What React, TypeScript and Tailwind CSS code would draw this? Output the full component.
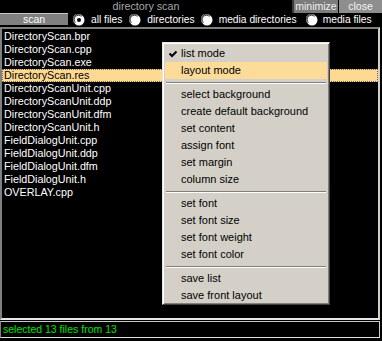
import React from "react"

const files = [
  "DirectoryScan.bpr",
  "DirectoryScan.cpp",
  "DirectoryScan.exe",
  "DirectoryScan.res",
  "DirectoryScanUnit.cpp",
  "DirectoryScanUnit.ddp",
  "DirectoryScanUnit.dfm",
  "DirectoryScanUnit.h",
  "FieldDialogUnit.cpp",
  "FieldDialogUnit.ddp",
  "FieldDialogUnit.dfm",
  "FieldDialogUnit.h",
  "OVERLAY.cpp",
]

const menuGroups = [
  ["list mode", "layout mode"],
  ["select background", "create default background", "set content", "assign font", "set margin", "column size"],
  ["set font", "set font size", "set font weight", "set font color"],
  ["save list", "save front layout"],
]

function Radio({ checked }: { checked?: boolean }) {
  return (
    <svg width="12" height="12" viewBox="0 0 12 12" className="shrink-0">
      <circle cx="6" cy="6" r="5.5" fill="#ffffff" />
      <path d="M1.5 9 A5 5 0 0 1 9 1.5" fill="none" stroke="#808080" strokeWidth="1" />
      <path d="M2.5 8.5 A4 4 0 0 1 8.5 2.5" fill="none" stroke="#404040" strokeWidth="1" />
      {checked && <circle cx="6" cy="6" r="2" fill="#000000" />}
    </svg>
  )
}

function Check() {
  return (
    <svg width="8" height="8" viewBox="0 0 8 8" className="absolute left-[4px] top-[5px]">
      <path d="M0.5 3.5 L3 6 L7.5 1.5" fill="none" stroke="#000" strokeWidth="2" />
    </svg>
  )
}

export default function App() {
  return (
    <div
      className="relative w-[382px] h-[341px] bg-black overflow-hidden text-[10.5px] leading-none whitespace-nowrap"
      style={{ fontFamily: '"Liberation Sans", Arial, sans-serif' }}
    >
      {/* title bar */}
      <div className="flex h-[13px]">
        <div className="flex-1 flex items-center justify-center text-[#a8a8a8] text-[10.75px]">directory scan</div>
        <div className="w-[46px] shrink-0 flex items-center justify-center bg-[#7c7c7c] text-[#f0f0f0] border-l-2 border-[#3a3a3a]">
          minimize
        </div>
        <div className="w-[44px] shrink-0 flex items-center justify-center bg-[#8e8e8e] text-[#f4f4f4] border-l border-black">
          close
        </div>
      </div>

      {/* options row */}
      <div className="flex items-center h-[12px]">
        <div className="w-[68px] shrink-0 h-[12px] flex items-center justify-center bg-[#808080] border-t border-[#c8c8c8] text-white">
          scan
        </div>
        <div className="flex items-center text-white ml-[5px] pt-[2px] text-[10.25px]">
          <Radio checked />
          <span className="ml-[6px] mr-[7px]">all files</span>
          <Radio />
          <span className="ml-[6px] mr-[6px]">directories</span>
          <Radio />
          <span className="ml-[6px] mr-[9px]">media directories</span>
          <Radio />
          <span className="ml-[5px]">media files</span>
        </div>
      </div>

      {/* file list */}
      <div className="mt-[2px] w-[380px] h-[293px] border-2 border-t-[#808080] border-l-[#808080] border-r-[#d4d0c8] border-b-[#e8e8e8] pt-px">
        {files.map((f) => (
          <div
            key={f}
            className={
              f === "DirectoryScan.res"
                ? "h-[13px] flex items-center pl-[1px] bg-[#fdd992] text-black border border-dotted border-[#7a6a50]"
                : "h-[13px] flex items-center pl-[2px] text-white"
            }
          >
            <span className="text-[10.75px]">{f}</span>
          </div>
        ))}
      </div>

      {/* status bar */}
      <div className="mt-px w-[380px] h-[17px] flex items-center pl-[2px] border border-t-[#c8c8c8] border-l-[#808080] border-r-[#d4d0c8] border-b-[#e0e0e0] text-[#00e000]">
        selected 13 files from 13
      </div>

      {/* context menu */}
      <div className="absolute left-[162px] top-[42px] w-[168px] h-[263px] bg-[#d4d0c8] border border-t-[#e8e6e0] border-l-[#e8e6e0] border-r-[#404040] border-b-[#404040] shadow-[inset_1px_1px_0_#ffffff,inset_-1px_-1px_0_#808080] p-[2px] text-black text-[11px]">
        {menuGroups.map((group, gi) => (
          <div key={gi}>
            {gi > 0 && (
              <div className="h-[7px] flex flex-col justify-center px-px">
                <div className="h-px bg-[#808080]" />
                <div className="h-px bg-white" />
              </div>
            )}
            {group.map((item) => (
              <div
                key={item}
                className={
                  item === "layout mode"
                    ? "relative h-[17px] flex items-center pl-[16px] bg-[#fddb98]"
                    : "relative h-[17px] flex items-center pl-[16px]"
                }
              >
                {item === "list mode" && <Check />}
                <span>{item}</span>
              </div>
            ))}
          </div>
        ))}
      </div>
    </div>
  )
}
